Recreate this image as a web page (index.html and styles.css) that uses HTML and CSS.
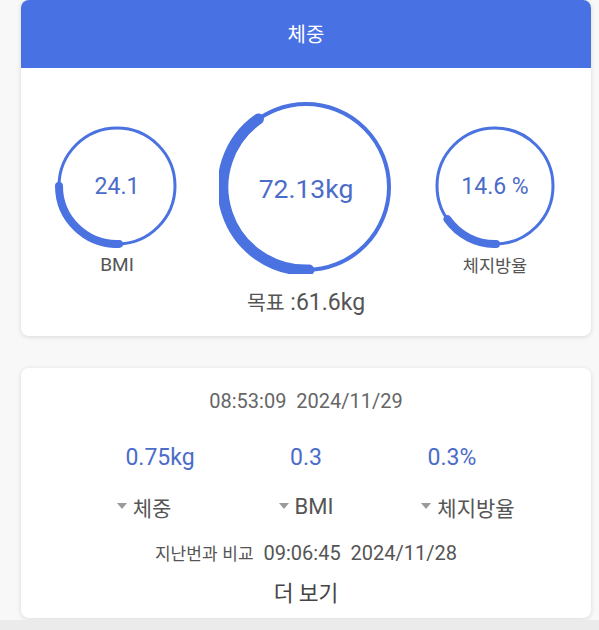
FILE: index.html
```html
<!DOCTYPE html>
<html lang="ko">
<head>
<meta charset="utf-8">
<title>체중</title>
<link rel="stylesheet" href="styles.css">
</head>
<body>
<div class="page">
  <section class="card weight-card">
    <header class="card-header">체중</header>
    <div class="gauges">
      <div class="gauge small">
        <div class="ring">
          <svg width="124" height="124" viewBox="0 0 124 124">
            <circle cx="62" cy="62" r="58" fill="none" stroke="#4a72e0" stroke-width="3"/>
            <path d="M4 62 A58 58 0 0 0 64 120" fill="none" stroke="#4a72e0" stroke-width="8" stroke-linecap="round"/>
          </svg>
          <span class="ring-value small-value">24.1</span>
        </div>
        <div class="gauge-label">BMI</div>
      </div>
      <div class="gauge big">
        <div class="ring">
          <svg width="174" height="174" viewBox="0 0 174 174">
            <circle cx="87" cy="87" r="83" fill="none" stroke="#4a72e0" stroke-width="4"/>
            <path d="M39.4 19 A83 83 0 0 0 89.9 170" fill="none" stroke="#4a72e0" stroke-width="11" stroke-linecap="round"/>
          </svg>
          <span class="ring-value big-value">72.13kg</span>
        </div>
        <div class="target"><span class="ko">목표</span> :61.6kg</div>
      </div>
      <div class="gauge small">
        <div class="ring">
          <svg width="124" height="124" viewBox="0 0 124 124">
            <circle cx="62" cy="62" r="58" fill="none" stroke="#4a72e0" stroke-width="3"/>
            <path d="M14.5 95.3 A58 58 0 0 0 63 120" fill="none" stroke="#4a72e0" stroke-width="8" stroke-linecap="round"/>
          </svg>
          <span class="ring-value small-value">14.6 %</span>
        </div>
        <div class="gauge-label"><span class="ko">체지방율</span></div>
      </div>
    </div>
  </section>

  <section class="card compare-card">
    <div class="stamp">08:53:09&nbsp;&nbsp;2024/11/29</div>
    <div class="values">
      <span>0.75kg</span>
      <span>0.3</span>
      <span>0.3%</span>
    </div>
    <div class="labels">
      <span class="lbl"><svg class="tri" width="10" height="6" viewBox="0 0 10 6"><path d="M0 0 H10 L5 6 Z" fill="#9a9a9a"/></svg><span class="ko">체중</span></span>
      <span class="lbl"><svg class="tri" width="10" height="6" viewBox="0 0 10 6"><path d="M0 0 H10 L5 6 Z" fill="#9a9a9a"/></svg>BMI</span>
      <span class="lbl"><svg class="tri" width="10" height="6" viewBox="0 0 10 6"><path d="M0 0 H10 L5 6 Z" fill="#9a9a9a"/></svg><span class="ko">체지방율</span></span>
    </div>
    <div class="prev"><span class="ko">지난번과 비교</span>&nbsp;&nbsp;09:06:45&nbsp;&nbsp;2024/11/28</div>
    <div class="more">더 보기</div>
  </section>
  <div class="bottom-bar"></div>
</div>
</body>
</html>
```

FILE: styles.css
```css
* { box-sizing: border-box; }
html, body {
  margin: 0;
  padding: 0;
  background: #f8f8f8;
  font-family: Roboto, "Noto Sans CJK KR", sans-serif;
  color: #555;
}
.page {
  width: 599px;
  height: 630px;
  overflow: hidden;
  display: flex;
  flex-direction: column;
  align-items: flex-start;
}
.ko {
  font-family: "Noto Sans CJK KR", sans-serif;
}
.card {
  width: 570px;
  margin-left: 21px;
  background: #fff;
  border-radius: 8px;
  box-shadow: 0 1px 5px rgba(0,0,0,0.13);
}
.weight-card {
  height: 336px;
  overflow: hidden;
}
.card-header {
  height: 68px;
  background: #4871e3;
  color: #fff;
  font-family: "Noto Sans CJK KR", sans-serif;
  font-size: 20px;
  display: flex;
  align-items: center;
  justify-content: center;
  padding-bottom: 1px;
}
.gauges {
  display: grid;
  grid-template-columns: 192px 186px 192px;
  padding-top: 32px;
}
.gauge {
  display: flex;
  flex-direction: column;
  align-items: center;
}
.gauge.small { padding-top: 24px; }
.ring {
  position: relative;
  display: flex;
}
.ring-value {
  position: absolute;
  inset: 0;
  display: flex;
  align-items: center;
  justify-content: center;
  color: #4b6cc9;
}
.small-value { font-size: 23px; }
.big-value { font-size: 26.5px; padding-top: 2px; }
.gauge-label {
  margin-top: 7px;
  line-height: 20px;
  font-size: 19px;
  color: #555;
}
.gauge-label .ko { font-size: 17.5px; }
.target {
  margin-top: 14px;
  line-height: 26px;
  font-size: 23px;
  color: #555;
}
.target .ko { font-size: 20.5px; }
.compare-card {
  margin-top: 32px;
  height: 250px;
  display: flex;
  flex-direction: column;
  align-items: center;
  padding-top: 21px;
}
.stamp {
  font-size: 20px;
  line-height: 24px;
  color: #666;
}
.values {
  display: grid;
  grid-template-columns: repeat(3, 146px);
  justify-items: center;
  margin-top: 30px;
  font-size: 23px;
  line-height: 30px;
  color: #4b6cc9;
}
.labels {
  display: grid;
  grid-template-columns: repeat(3, 162px);
  justify-items: center;
  margin-top: 19px;
  font-size: 22px;
  line-height: 30px;
  color: #555;
}
.labels .ko { font-size: 21px; }
.lbl {
  display: flex;
  align-items: center;
  gap: 6px;
}
.tri { margin-top: -2px; }
.prev {
  margin-top: 19px;
  font-size: 20px;
  line-height: 24px;
  color: #555;
}
.prev .ko { font-size: 17px; }
.more {
  margin-top: 15px;
  font-size: 21.5px;
  line-height: 28px;
  color: #444;
}
.bottom-bar {
  margin-top: 2px;
  width: 599px;
  flex: 1;
  background: #ebebeb;
}
```
